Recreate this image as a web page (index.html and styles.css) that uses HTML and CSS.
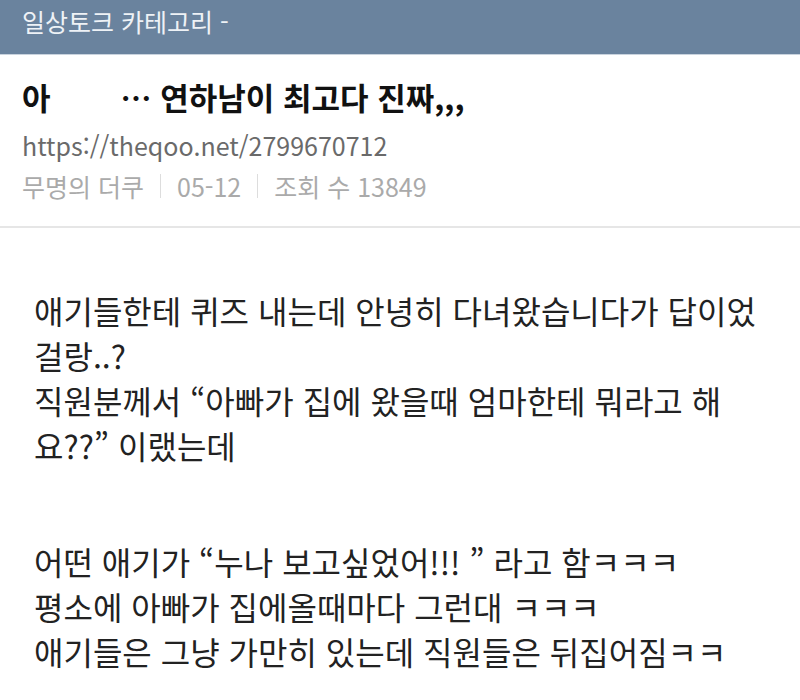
FILE: index.html
```html
<!DOCTYPE html>
<html lang="ko">
<head>
    <meta charset="UTF-8">
    <meta name="viewport" content="width=device-width, initial-scale=1.0">
    <title>일상토크</title>
    <link rel="stylesheet" href="styles.css">
</head>
<body>

    <div class="category-bar">일상토크 카테고리 -</div>

    <div class="post-head">
        <h1 class="post-title">아<span class="blank"></span>… 연하남이 최고다 진짜,,,</h1>
        <div class="post-url">https://theqoo.net/2799670712</div>
        <div class="post-meta">
            <span>무명의 더쿠</span>
            <span class="sep"></span>
            <span>05-12</span>
            <span class="sep"></span>
            <span>조회 수 13849</span>
        </div>
    </div>

    <div class="post-body">
        <p>애기들한테 퀴즈 내는데 안녕히 다녀왔습니다가 답이었<br>걸랑..?<br>직원분께서 “아빠가 집에 왔을때 엄마한테 뭐라고 해<br>요??” 이랬는데</p>
        <p>어떤 애기가 “누나 보고싶었어!!! ” 라고 함ㅋㅋㅋ<br>평소에 아빠가 집에올때마다 그런대 ㅋㅋㅋ<br>애기들은 그냥 가만히 있는데 직원들은 뒤집어짐ㅋㅋ</p>
    </div>

</body>
</html>
```

FILE: styles.css
```css
/* Global */
body {
    margin: 0;
    padding: 0;
    background: #fff;
    font-family: "Noto Sans CJK KR", "Noto Sans", sans-serif;
    color: #222;
}

/* Category bar */
.category-bar {
    background-color: #6a839e;
    color: #eef2f6;
    font-size: 25px;
    height: 55px;
    line-height: 42px;
    padding: 0 22px;
    box-sizing: border-box;
    border-bottom: 1px solid #c9d3de;
}

/* Post header */
.post-head {
    padding: 20px 22px 0;
    height: 173px;
    box-sizing: border-box;
    border-bottom: 2px solid #e6e6e6;
}

.post-title {
    margin: 0;
    font-size: 31px;
    font-weight: 700;
    color: #111;
    line-height: 44px;
}

.blank {
    display: inline-block;
    width: 70px;
}

.post-url {
    font-size: 25px;
    color: #6a6a6a;
    line-height: 40px;
    margin-top: 6px;
}

.post-meta {
    display: flex;
    align-items: center;
    gap: 16px;
    font-size: 25px;
    color: #aaa;
    line-height: 42px;
}

.sep {
    width: 1px;
    height: 24px;
    background: #ddd;
}

/* Post body */
.post-body {
    padding: 60px 34px 0;
}

.post-body p {
    margin: 0 0 71px;
    font-size: 32px;
    line-height: 45px;
    color: #222;
}

.post-body p:last-child {
    margin-bottom: 0;
}
```
